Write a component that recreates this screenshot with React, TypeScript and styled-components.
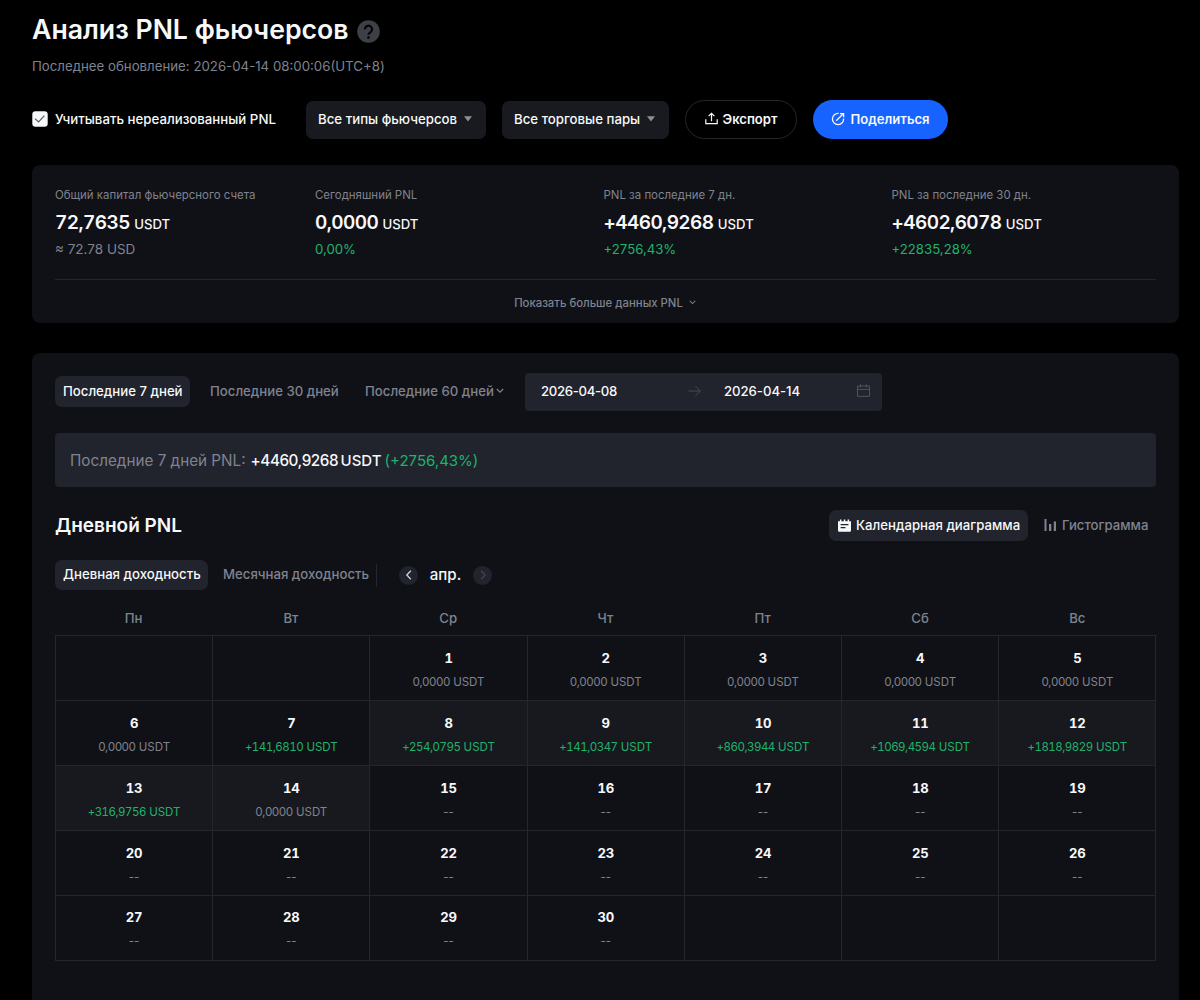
import React from "react";
import styled, { createGlobalStyle, css } from "styled-components";

const c = {
  text: "#f7f8fa",
  muted: "#7f838f",
  green: "#20b26c",
  card: "#101116",
  raised: "#21232d",
  line: "#24262e",
};

const Global = createGlobalStyle`
  * { box-sizing: border-box; }
  html, body { margin: 0; background: #000; height: 1000px; overflow: hidden; }
  body { font-family: Inter, "Liberation Sans", sans-serif; color: ${c.text}; }
  svg { display: block; flex: none; }
  button { font-family: inherit; border: 0; padding: 0; background: none; color: inherit; white-space: nowrap; }
`;

const Page = styled.main`
  width: 1200px;
  height: 1000px;
  overflow: hidden;
  padding: 12px 21px 0 32px;
  display: flex;
  flex-direction: column;
`;

const TitleRow = styled.div`
  display: flex;
  align-items: center;
  gap: 8px;
  height: 36px;
`;

const Title = styled.h1`
  margin: 0;
  padding-bottom: 1px;
  font-size: 26.65px;
  font-weight: 600;
  line-height: 35px;
  white-space: nowrap;
`;

const HelpWrap = styled.span`
  padding-top: 3px;
`;

const Updated = styled.div`
  margin-top: 8px;
  height: 20px;
  line-height: 20px;
  font-size: 13.25px;
  color: ${c.muted};
`;

const Toolbar = styled.div`
  display: flex;
  align-items: flex-end;
  height: 39px;
  margin-top: 24px;
`;

const CheckLabel = styled.label`
  display: flex;
  align-items: center;
  gap: 7px;
  width: 274px;
  height: 38px;
  padding-bottom: 2px;
  font-size: 13.25px;
  font-weight: 500;
  white-space: nowrap;
`;

const Select = styled.button<{ $w: number }>`
  display: flex;
  align-items: center;
  gap: 7px;
  width: ${(p) => p.$w}px;
  height: 38px;
  padding: 0 0 2px 12px;
  margin-right: 16px;
  border-radius: 7px;
  background: #181a20;
  font-size: 13.25px;
  font-weight: 500;
`;

const Pill = styled.button<{ $w: number; $primary?: boolean }>`
  display: flex;
  align-items: center;
  justify-content: center;
  gap: 5px;
  width: ${(p) => p.$w}px;
  height: 39px;
  padding-bottom: 2px;
  margin-right: 16px;
  border-radius: 20px;
  font-size: 13.1px;
  font-weight: 600;
  ${(p) =>
    p.$primary
      ? css`
          background: #1763ff;
        `
      : css`
          border: 1px solid #24262b;
        `}
`;

const Card = styled.section`
  background: ${c.card};
  border-radius: 8px;
  padding: 0 23px;
`;

const Summary = styled(Card)`
  margin-top: 26px;
  height: 158px;
  flex: none;
`;

const Stats = styled.div`
  display: grid;
  grid-template-columns: 260px 288.5px 288px 1fr;
  height: 115px;
  padding-top: 19px;
  border-bottom: 1px solid ${c.line};
`;

const StatLabel = styled.div`
  height: 22px;
  line-height: 22px;
  font-size: 11.45px;
  color: ${c.muted};
`;

const StatValue = styled.div`
  height: 32px;
  line-height: 34px;
  font-size: 19px;
  font-weight: 600;
  font-variant-numeric: tabular-nums;
  letter-spacing: -0.57px;
  white-space: nowrap;
`;

const Unit = styled.span`
  font-size: 13.2px;
  font-weight: 500;
  letter-spacing: 0;
  margin-left: 4.3px;
`;

const StatSub = styled.div<{ $up?: boolean }>`
  height: 22px;
  line-height: 20px;
  padding-top: 1px;
  font-size: ${(p) => (p.$up ? 13.2 : 13.5)}px;
  color: ${(p) => (p.$up ? c.green : c.muted)};
`;

const More = styled.button`
  display: flex;
  align-items: center;
  justify-content: center;
  gap: 6px;
  width: 100%;
  height: 45px;
  padding-right: 1px;
  font-size: 11.35px;
  font-weight: 500;
  color: ${c.muted};
`;

const Details = styled(Card)`
  margin-top: 30px;
  flex: 1;
  border-radius: 8px 8px 0 0;
`;

const RangeRow = styled.div`
  display: flex;
  align-items: center;
  height: 39px;
  margin-top: 19px;
`;

const Tab = styled.button<{
  $w: number;
  $active?: boolean;
  $mr?: number;
  $gap?: number;
  $pad?: number;
  $lift?: boolean;
  $h?: number;
}>`
  display: flex;
  align-items: center;
  gap: ${(p) => p.$gap ?? 0}px;
  flex: none;
  width: ${(p) => p.$w}px;
  height: ${(p) => p.$h ?? 31}px;
  padding-left: ${(p) => p.$pad ?? 8}px;
  padding-bottom: ${(p) => (p.$lift ? 2 : 0)}px;
  margin-right: ${(p) => p.$mr ?? 0}px;
  border-radius: 7px;
  font-size: 13.2px;
  font-weight: 500;
  background: ${(p) => (p.$active ? c.raised : "transparent")};
  color: ${(p) => (p.$active ? c.text : c.muted)};
`;

const DateRange = styled.div`
  display: flex;
  align-items: center;
  width: 357px;
  height: 38px;
  padding: 0 12px 2px 16px;
  border-radius: 4px;
  background: ${c.raised};
  font-size: 13.2px;
  font-weight: 500;
`;

const DateText = styled.span<{ $w: number; $tight?: boolean }>`
  width: ${(p) => p.$w}px;
  letter-spacing: ${(p) => (p.$tight ? "-0.32px" : "-0.05px")};
`;

const ArrowBox = styled.span`
  width: 36px;
`;

const Banner = styled.div`
  display: flex;
  align-items: center;
  height: 54px;
  margin-top: 22px;
  padding: 0 0 0 15px;
  border-radius: 4px;
  background: ${c.raised};
  font-size: 15.25px;
  color: ${c.muted};
`;

const BannerValue = styled.span`
  margin-left: 5px;
  font-weight: 500;
  letter-spacing: -0.45px;
  color: ${c.text};
`;

const BannerUnit = styled.span`
  margin-left: 2.5px;
  font-weight: 500;
  font-size: 15px;
  color: ${c.text};
`;

const BannerPct = styled.span`
  margin-left: 3px;
  font-size: 15px;
  color: ${c.green};
`;

const HeadRow = styled.div`
  display: flex;
  align-items: center;
  justify-content: space-between;
  height: 32px;
  margin-top: 22px;
`;

const Heading = styled.h2`
  margin: 0;
  font-size: 19px;
  font-weight: 600;
`;

const Views = styled.div`
  display: flex;
`;

const ModeRow = styled.div`
  display: flex;
  align-items: center;
  height: 30px;
  margin-top: 19px;
`;

const Divider = styled.span`
  width: 1px;
  height: 23px;
  background: ${c.line};
`;

const Step = styled.button<{ $off?: boolean }>`
  display: grid;
  place-items: center;
  width: 19px;
  height: 19px;
  border-radius: 50%;
  background: ${c.raised};
  color: ${(p) => (p.$off ? "#41444e" : "#d0d3da")};
`;

const Month = styled.span`
  width: 55px;
  padding-bottom: 1px;
  text-align: center;
  font-size: 15.1px;
  font-weight: 500;
`;

const MonthNav = styled.div`
  display: flex;
  align-items: center;
  margin-left: 22px;
`;

const WeekHead = styled.div`
  display: grid;
  grid-template-columns: repeat(7, 1fr);
  height: 45px;
  line-height: 57px;
  text-align: center;
  font-size: 13.2px;
  font-weight: 500;
  color: ${c.muted};
`;

const Month7 = styled.div`
  display: grid;
  grid-template-columns: repeat(7, 1fr);
  grid-template-rows: repeat(5, 65px);
  width: 1101.5px;
  border-top: 1px solid ${c.line};
  border-left: 1px solid ${c.line};
`;

const Cell = styled.div<{ $hi?: boolean; $last?: boolean }>`
  display: flex;
  flex-direction: column;
  align-items: center;
  padding-top: ${(p) => (p.$last ? 11 : 12)}px;
  border-right: 1px solid ${c.line};
  border-bottom: 1px solid ${c.line};
  background: ${(p) => (p.$hi ? "#18191f" : "transparent")};
`;

const Day = styled.div`
  height: 20px;
  line-height: 20px;
  font-size: 13.1px;
  font-weight: 700;
  font-variant-numeric: tabular-nums;
  letter-spacing: -0.2px;
`;

const Amount = styled.div<{ $up: boolean }>`
  margin-top: 4px;
  height: 20px;
  line-height: 20px;
  font-size: 11.5px;
  white-space: pre;
  color: ${(p) => (p.$up ? c.green : c.muted)};
`;

const Digits = styled.span`
  font-variant-numeric: tabular-nums;
  letter-spacing: -0.5px;
`;

const HelpIcon = () => (
  <svg width="23" height="23" viewBox="0 0 23 23">
    <circle cx="11.5" cy="11.5" r="11.3" fill="#3d4047" />
    <path d="M7.9 9.4a3.6 3.6 0 1 1 5.6 2.9c-1.3.8-2 1.2-2 2.4" fill="none" stroke="#050505" strokeWidth="2.2" />
    <circle cx="11.5" cy="17.6" r="1.4" fill="#050505" />
  </svg>
);

const CheckIcon = () => (
  <svg width="16" height="16" viewBox="0 0 16 16">
    <rect x="0.3" y="0.3" width="15.4" height="15.4" rx="3.2" fill="#f7f8fa" />
    <path d="M3 7.6l3.6 3.4 5.8-6.4" fill="none" stroke="#5a5d64" strokeWidth="1.2" />
  </svg>
);

const CaretIcon = () => (
  <svg width="8" height="6" viewBox="0 0 8 6">
    <path d="M0 .3h8L4 5.4z" fill="#8b8f99" />
  </svg>
);

const UploadIcon = () => (
  <svg width="13" height="13" viewBox="0 0 13 13" fill="none" stroke="currentColor" strokeWidth="1.2">
    <path d="M6.5 9.2V1.5M3.6 4.2l2.9-2.9 2.9 2.9M.8 7.3v4.4h11.4V7.3" />
  </svg>
);

const ShareIcon = () => (
  <svg width="14" height="14" viewBox="0 0 14 14" fill="none" stroke="currentColor" strokeWidth="1.3">
    <path d="M7.6 1.4A5.6 5.6 0 1 0 12.6 6.5M5.2 8.8L12 2M9 1.6h3.6v3.6" />
  </svg>
);

const ChevronDown = ({ size = 8 }: { size?: number }) => (
  <svg width={size} height={size} viewBox="0 0 8 8" fill="none" stroke="currentColor" strokeWidth="1.2">
    <path d="M.8 2L4 5.2 7.2 2" />
  </svg>
);

const ArrowRight = () => (
  <svg width="13" height="12" viewBox="0 0 13 12" fill="none" stroke="#464953" strokeWidth="1">
    <path d="M.3 6h12M7.3 1l5 5-5 5" />
  </svg>
);

const CalendarIcon = () => (
  <svg width="13" height="13" viewBox="0 0 13 13" fill="none" stroke="#50535d" strokeWidth="1">
    <path d="M.5 2h12v10.3H.5zM.5 5.4h12M3.6.3v3.2M9.4.3v3.2" />
  </svg>
);

const CalendarSolid = () => (
  <svg width="13" height="13" viewBox="0 0 13 13">
    <path d="M0 2.2h1.9V.4h1.5v1.8h2.4V.4h1.5v1.8h2.3V.4h1.5v1.8H13V11.5a1.2 1.2 0 0 1-1.2 1.2H1.2A1.2 1.2 0 0 1 0 11.5z" fill="#f7f8fa" />
    <path d="M2.6 5.6h7.8M2.6 8.7h4.8" stroke="#21232d" strokeWidth="1.2" />
  </svg>
);

const BarsIcon = () => (
  <svg width="13" height="12" viewBox="0 0 13 12">
    <path d="M.5 0h2v12h-2zM5 5h2.3v7H5zM9.8 2.6H12V12H9.8z" fill="currentColor" />
  </svg>
);

const Chevron = ({ right }: { right?: boolean }) => (
  <svg width="10" height="10" viewBox="0 0 10 10" fill="none" stroke="currentColor" strokeWidth="1.3">
    <path d={right ? "M3.2 .8L7.2 5l-4 4.2" : "M6.8 .8L2.8 5l4 4.2"} />
  </svg>
);

const stats = [
  { label: "Общий капитал фьючерсного счета", value: "72,7635", sub: "≈ 72.78 USD", up: false },
  { label: "Сегодняшний PNL", value: "0,0000", sub: "0,00%", up: true },
  { label: "PNL за последние 7 дн.", value: "+4460,9268", sub: "+2756,43%", up: true },
  { label: "PNL за последние 30 дн.", value: "+4602,6078", sub: "+22835,28%", up: true },
];

const weekdays = ["Пн", "Вт", "Ср", "Чт", "Пт", "Сб", "Вс"];

const gains: Record<number, string> = {
  7: "+141,6810",
  8: "+254,0795",
  9: "+141,0347",
  10: "+860,3944",
  11: "+1069,4594",
  12: "+1818,9829",
  13: "+316,9756",
};

const cells = Array.from({ length: 35 }, (_, i) => {
  const day = i - 1;
  return day >= 1 && day <= 30 ? day : null;
});

const today = 14;

export default function App() {
  return (
    <>
      <Global />
      <Page>
        <TitleRow>
          <Title>Анализ PNL фьючерсов</Title>
          <HelpWrap>
            <HelpIcon />
          </HelpWrap>
        </TitleRow>
        <Updated>Последнее обновление: 2026-04-14 08:00:06(UTC+8)</Updated>

        <Toolbar>
          <CheckLabel>
            <CheckIcon />
            Учитывать нереализованный PNL
          </CheckLabel>
          <Select $w={180}>
            Все типы фьючерсов
            <CaretIcon />
          </Select>
          <Select $w={167}>
            Все торговые пары
            <CaretIcon />
          </Select>
          <Pill $w={112}>
            <UploadIcon />
            Экспорт
          </Pill>
          <Pill $w={135} $primary>
            <ShareIcon />
            Поделиться
          </Pill>
        </Toolbar>

        <Summary>
          <Stats>
            {stats.map((s) => (
              <div key={s.label}>
                <StatLabel>{s.label}</StatLabel>
                <StatValue>
                  {s.value}
                  <Unit>USDT</Unit>
                </StatValue>
                <StatSub $up={s.up}>{s.sub}</StatSub>
              </div>
            ))}
          </Stats>
          <More>
            Показать больше данных PNL
            <ChevronDown size={7} />
          </More>
        </Summary>

        <Details>
          <RangeRow>
            <Tab $w={135} $active $lift $mr={12}>
              Последние 7 дней
            </Tab>
            <Tab $w={146} $lift $mr={9}>
              Последние 30 дней
            </Tab>
            <Tab $w={168} $lift $gap={2}>
              Последние 60 дней
              <ChevronDown />
            </Tab>
            <DateRange>
              <DateText $w={147} $tight>
                2026-04-08
              </DateText>
              <ArrowBox>
                <ArrowRight />
              </ArrowBox>
              <DateText $w={133}>2026-04-14</DateText>
              <CalendarIcon />
            </DateRange>
          </RangeRow>

          <Banner>
            Последние 7 дней PNL:
            <BannerValue>+4460,9268</BannerValue>
            <BannerUnit>USDT</BannerUnit>
            <BannerPct>(+2756,43%)</BannerPct>
          </Banner>

          <HeadRow>
            <Heading>Дневной PNL</Heading>
            <Views>
              <Tab $w={199} $active $gap={5} $pad={9} $mr={8}>
                <CalendarSolid />
                Календарная диаграмма
              </Tab>
              <Tab $w={120} $gap={5} $pad={8}>
                <BarsIcon />
                Гистограмма
              </Tab>
            </Views>
          </HeadRow>

          <ModeRow>
            <Tab $w={153} $h={30} $active $lift $mr={7}>
              Дневная доходность
            </Tab>
            <Tab $w={161} $h={30} $lift>
              Месячная доходность
            </Tab>
            <Divider />
            <MonthNav>
              <Step>
                <Chevron />
              </Step>
              <Month>апр.</Month>
              <Step $off>
                <Chevron right />
              </Step>
            </MonthNav>
          </ModeRow>

          <WeekHead>
            {weekdays.map((d) => (
              <span key={d}>{d}</span>
            ))}
          </WeekHead>
          <Month7>
            {cells.map((day, i) => (
              <Cell key={i} $hi={day !== null && day >= 8 && day <= today} $last={i >= 28}>
                {day !== null && (
                  <>
                    <Day>{day}</Day>
                    <Amount $up={day in gains}>
                      {day > today ? (
                        "--"
                      ) : (
                        <>
                          <Digits>{gains[day] ?? "0,0000"}</Digits> USDT
                        </>
                      )}
                    </Amount>
                  </>
                )}
              </Cell>
            ))}
          </Month7>
        </Details>
      </Page>
    </>
  );
}
